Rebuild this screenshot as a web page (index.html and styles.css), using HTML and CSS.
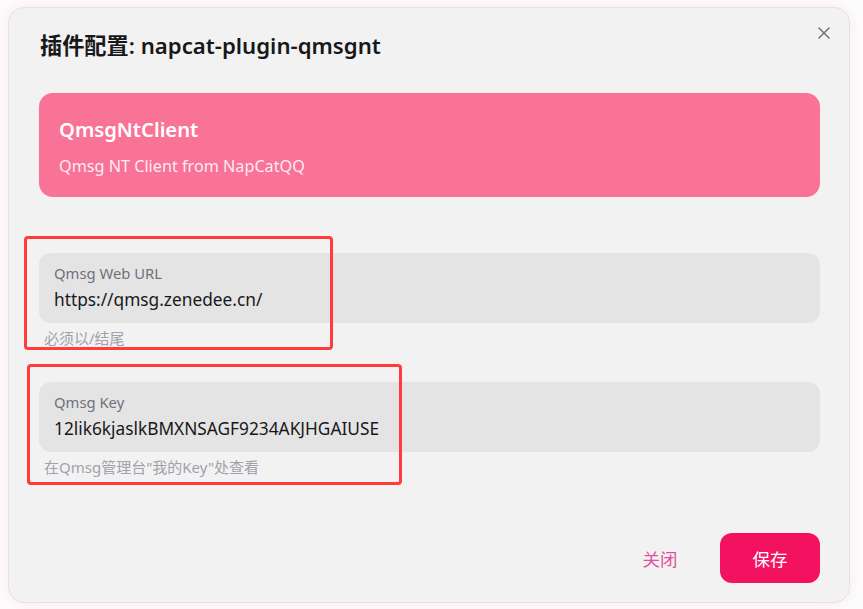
FILE: index.html
```html
<!DOCTYPE html>
<html lang="zh-CN">
<head>
<meta charset="utf-8">
<title>插件配置</title>
<link rel="stylesheet" href="styles.css">
</head>
<body>
<div class="backdrop">
  <section class="dialog">
    <button class="close" aria-label="关闭">
      <svg width="12" height="12" viewBox="0 0 12 12"><path d="M1 1L11 11M11 1L1 11" stroke="#71717a" stroke-width="1.5" stroke-linecap="round"/></svg>
    </button>
    <header class="dialog-header">插件配置: napcat-plugin-qmsgnt</header>
    <div class="dialog-body">
      <div class="plugin-card">
        <div class="plugin-name">QmsgNtClient</div>
        <div class="plugin-desc">Qmsg NT Client from NapCatQQ</div>
      </div>
      <div class="field field-url">
        <div class="input">
          <div class="label">Qmsg Web URL</div>
          <div class="value">https://qmsg.zenedee.cn/</div>
        </div>
        <div class="helper">必须以/结尾</div>
        <div class="mark mark-url"></div>
      </div>
      <div class="field field-key">
        <div class="input">
          <div class="label">Qmsg Key</div>
          <div class="value">12lik6kjaslkBMXNSAGF9234AKJHGAIUSE</div>
        </div>
        <div class="helper">在Qmsg管理台"我的Key"处查看</div>
        <div class="mark mark-key"></div>
      </div>
    </div>
    <footer class="dialog-footer">
      <button class="btn btn-light">关闭</button>
      <button class="btn btn-solid">保存</button>
    </footer>
  </section>
</div>
</body>
</html>
```
FILE: styles.css
```css
* { box-sizing: border-box; }
html, body { margin: 0; padding: 0; }
body {
  width: 863px;
  height: 609px;
  overflow: hidden;
  background: #fdfcfd;
  font-family: "Noto Sans", "Noto Sans CJK SC", sans-serif;
  color: #18181b;
}
.backdrop {
  height: 609px;
  padding: 7px 13px 6px 8px;
  display: flex;
}
.dialog {
  position: relative;
  width: 842px;
  height: 596px;
  background: #f2f2f2;
  border: 1px solid #e2e2e4;
  border-radius: 16px;
  box-shadow: 0 0 14px rgba(240, 180, 200, 0.25);
  padding: 23px 29px 19px 30px;
  display: flex;
  flex-direction: column;
}
.close {
  position: absolute;
  top: 11px;
  right: 11px;
  width: 28px;
  height: 28px;
  border: 0;
  background: transparent;
  padding: 0;
  display: flex;
  align-items: center;
  justify-content: center;
}
.dialog-header {
  font-size: 22.2px;
  line-height: 30px;
  font-weight: 600;
  color: #18181b;
  padding-left: 1px;
}
.dialog-body {
  margin-top: 32px;
  display: flex;
  flex-direction: column;
}
.plugin-card {
  background: #f97397;
  border-radius: 14px;
  height: 104px;
  padding: 22px 20px 20px;
  display: flex;
  flex-direction: column;
  gap: 13px;
  color: #fff;
}
.plugin-name {
  font-size: 20.2px;
  line-height: 28px;
  font-weight: 600;
}
.plugin-desc {
  font-size: 16.2px;
  line-height: 20px;
  color: rgba(255, 255, 255, 0.88);
}
.field {
  position: relative;
  display: flex;
  flex-direction: column;
}
.field-url { margin-top: 56px; }
.field-key { margin-top: 35px; }
.input {
  background: #e4e4e5;
  border-radius: 12px;
  height: 70px;
  padding: 11px 15px 12px;
  display: flex;
  flex-direction: column;
  gap: 6px;
}
.label {
  font-size: 14.8px;
  line-height: 18px;
  color: #71717a;
}
.value {
  font-size: 17.3px;
  line-height: 24px;
  color: #18181b;
}
.helper {
  margin-top: 6px;
  padding-left: 5px;
  font-size: 15px;
  line-height: 18px;
  color: #a1a1aa;
}
.mark {
  position: absolute;
  border: 3px solid #ff3b3b;
  border-radius: 4px;
  pointer-events: none;
}
.mark-url { left: -15px; top: -17px; width: 309px; height: 114px; }
.mark-key { left: -12px; top: -18px; width: 375px; height: 121px; }
.dialog-footer {
  margin-top: auto;
  display: flex;
  justify-content: flex-end;
  gap: 12px;
}
.btn {
  height: 50px;
  border: 0;
  border-radius: 12px;
  font-family: "Noto Sans", "Noto Sans CJK SC", sans-serif;
  font-size: 17.5px;
  cursor: pointer;
}
.btn-light {
  width: 96px;
  background: transparent;
  color: #e0509f;
}
.btn-solid {
  width: 100px;
  background: #f31260;
  color: #fff;
}
```
